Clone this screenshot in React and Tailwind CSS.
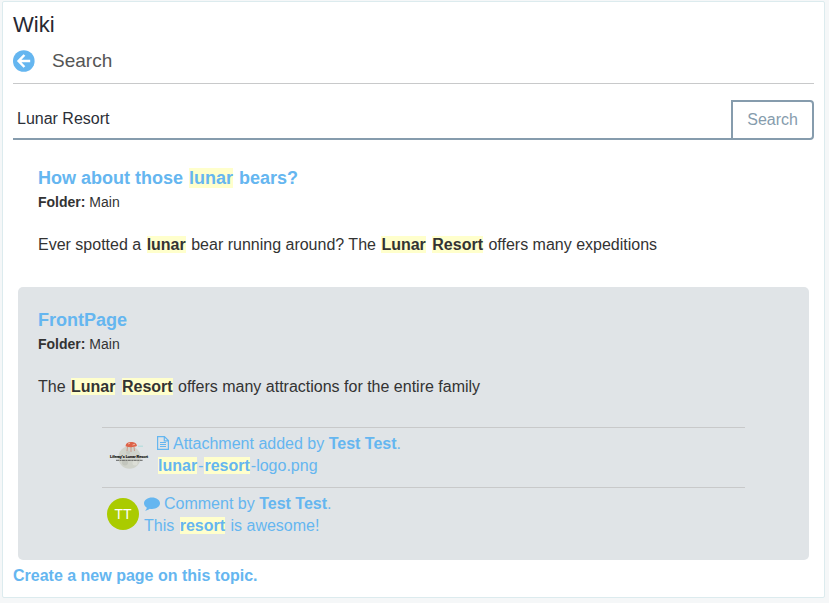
import React from "react";

function Mark({ children }) {
  return <mark className="mx-px bg-[#ffffcc] font-bold text-inherit">{children}</mark>;
}

function BackIcon() {
  return (
    <svg viewBox="0 0 22 22" className="size-[22px]" aria-hidden="true">
      <circle cx="10.8" cy="11" r="10.8" fill="#65b6f0" />
      <path d="M11.4 5 L5.6 11 L11.4 17 M6 11 H17.2" fill="none" stroke="#fff" strokeWidth="2.5" />
    </svg>
  );
}

function FileIcon() {
  return (
    <svg viewBox="0 0 12 14" className="mr-1 inline-block h-[14px] w-3 align-[-1px]" aria-hidden="true">
      <path d="M.6 .6 H7.4 L11.4 4.6 V13.4 H.6 Z M7.3 .8 V4.8 H11.2" fill="none" stroke="#65b6f0" strokeWidth="1.2" />
      <path d="M3 6.5 H9 M3 8.5 H9 M3 10.5 H9" stroke="#65b6f0" strokeWidth="1" />
    </svg>
  );
}

function CommentIcon() {
  return (
    <svg viewBox="0 0 16 14" className="mr-1 inline-block h-[14px] w-4 align-[-2px]" aria-hidden="true">
      <path
        d="M8 .6 C12.4 .6 16 3.1 16 6.3 C16 9.5 12.4 12 8 12 C7.2 12 6.5 11.9 5.8 11.8 C4.4 13 2.8 13.5 1 13.6 C2 12.8 2.7 11.8 2.8 10.7 C1.1 9.7 0 8.1 0 6.3 C0 3.1 3.6 .6 8 .6 Z"
        fill="#65b6f0"
      />
    </svg>
  );
}

function ResortLogo() {
  return (
    <svg viewBox="0 0 40 30" className="h-[30px] w-10" role="img" aria-label="Liferay's Lunar Resort">
      <circle cx="20.5" cy="17.5" r="11.2" fill="#d0d3cb" />
      <circle cx="16" cy="22.5" r="3" fill="#c2c5bd" />
      <circle cx="26" cy="23" r="2.5" fill="#dcded7" />
      <circle cx="19" cy="12.5" r="2" fill="#c6c9c1" />
      <path d="M18.5 6.5 L18 11 M22 6.5 V12 M25 6.5 L25.5 11" stroke="#c9826f" strokeWidth=".7" />
      <path d="M16.5 6.2 C16.6 3.4 19 2 22 2 C25.4 2 27.8 3.4 27.9 6 C25 7.4 20 7.6 16.5 6.2 Z" fill="#dd6248" />
      <path d="M19 4 L21 3.2 M23.5 5 L26 4.2" stroke="#f3c6b8" strokeWidth=".8" />
      <path d="M29 6.2 H34" stroke="#abdcdb" strokeWidth="1" />
      <text x="1" y="18.2" fontFamily="Liberation Sans, Arial, sans-serif" fontSize="3.6" fontWeight="700" fill="#161616" stroke="#161616" strokeWidth=".2">
        Liferay's Lunar Resort
      </text>
      <path d="M7 20.3 H34" stroke="#555" strokeWidth=".9" strokeDasharray="3 .5 2 .4" />
    </svg>
  );
}

function Result({ title, shaded, summary, children }) {
  return (
    <article className={shaded ? "rounded-[5px] bg-[#e0e4e7] px-5 pt-5" : "px-5 pt-5"}>
      <h2 className="text-[18px] leading-[26px] font-bold">
        <a href="#page" className="text-[#65b6f0]">{title}</a>
      </h2>
      <p className="mt-px text-sm leading-5">
        <strong>Folder:</strong> Main
      </p>
      <p className="mt-[22px] pb-[29px] leading-[22px]">{summary}</p>
      {children}
    </article>
  );
}

export default function App() {
  return (
    <div className="min-h-screen bg-[#f5f7f8] pt-px pr-1 pb-[5px] pl-0.5 font-['Liberation_Sans',Arial,sans-serif] text-base text-[#333]">
      <main className="rounded-[2px] border border-[#dcebee] bg-white px-2.5 pt-[11px] pb-[9px]">
        <h1 className="text-[22px] leading-6 text-[#272833]">Wiki</h1>

        <header className="mt-2 flex items-center gap-[17px] border-b border-[#c8c9ca] pt-1 pr-2 pb-2.5">
          <a href="#back" aria-label="Back"><BackIcon /></a>
          <h2 className="text-[19px] leading-6 text-[#555]">Search</h2>
        </header>

        <form className="mt-4 flex" onSubmit={(e) => e.preventDefault()}>
          <input
            type="text"
            aria-label="Search the wiki"
            defaultValue="Lunar Resort"
            className="h-10 min-w-0 flex-1 border-b-2 border-[#869cad] px-1 text-[#2b2f38] outline-none"
          />
          <button type="submit" className="h-10 rounded-r-[4px] border-2 border-[#869cad] px-3.5 text-[#869cad]">
            Search
          </button>
        </form>

        <section className="mx-[5px] mt-[5px] flex flex-col gap-0.5">
          <Result
            title={<>How about those <Mark>lunar</Mark> bears?</>}
            summary={
              <>
                Ever spotted a <Mark>lunar</Mark> bear running around? The <Mark>Lunar</Mark> <Mark>Resort</Mark> offers many expeditions
              </>
            }
          />
          <Result
            shaded
            title="FrontPage"
            summary={
              <>
                The <Mark>Lunar</Mark> <Mark>Resort</Mark> offers many attractions for the entire family
              </>
            }
          >
            <ul className="mr-11 ml-16 pb-[13px] leading-[22px] text-[#65b6f0]">
              <li className="border-t border-[#c8c9ca] px-[5px] pt-[5px] pb-2.5">
                <a href="#attachment" className="flex items-center gap-2">
                  <span className="w-[42px] pl-0.5"><ResortLogo /></span>
                  <span>
                    <FileIcon />Attachment added by <strong>Test Test</strong>.<br />
                    <Mark>lunar</Mark>-<Mark>resort</Mark>-logo.png
                  </span>
                </a>
              </li>
              <li className="border-t border-[#c8c9ca] px-[5px] pt-[5px] pb-2.5">
                <a href="#comment" className="flex items-start gap-[5px]">
                  <span className="mt-[5px] flex size-8 items-center justify-center rounded-full bg-[#aacb00] text-sm text-white">TT</span>
                  <span>
                    <CommentIcon />Comment by <strong>Test Test</strong>.<br />
                    This <Mark>resort</Mark> is awesome!
                  </span>
                </a>
              </li>
            </ul>
          </Result>
        </section>

        <a href="#create" className="mt-1 block leading-6 font-bold text-[#65b6f0]">
          Create a new page on this topic.
        </a>
      </main>
    </div>
  );
}
